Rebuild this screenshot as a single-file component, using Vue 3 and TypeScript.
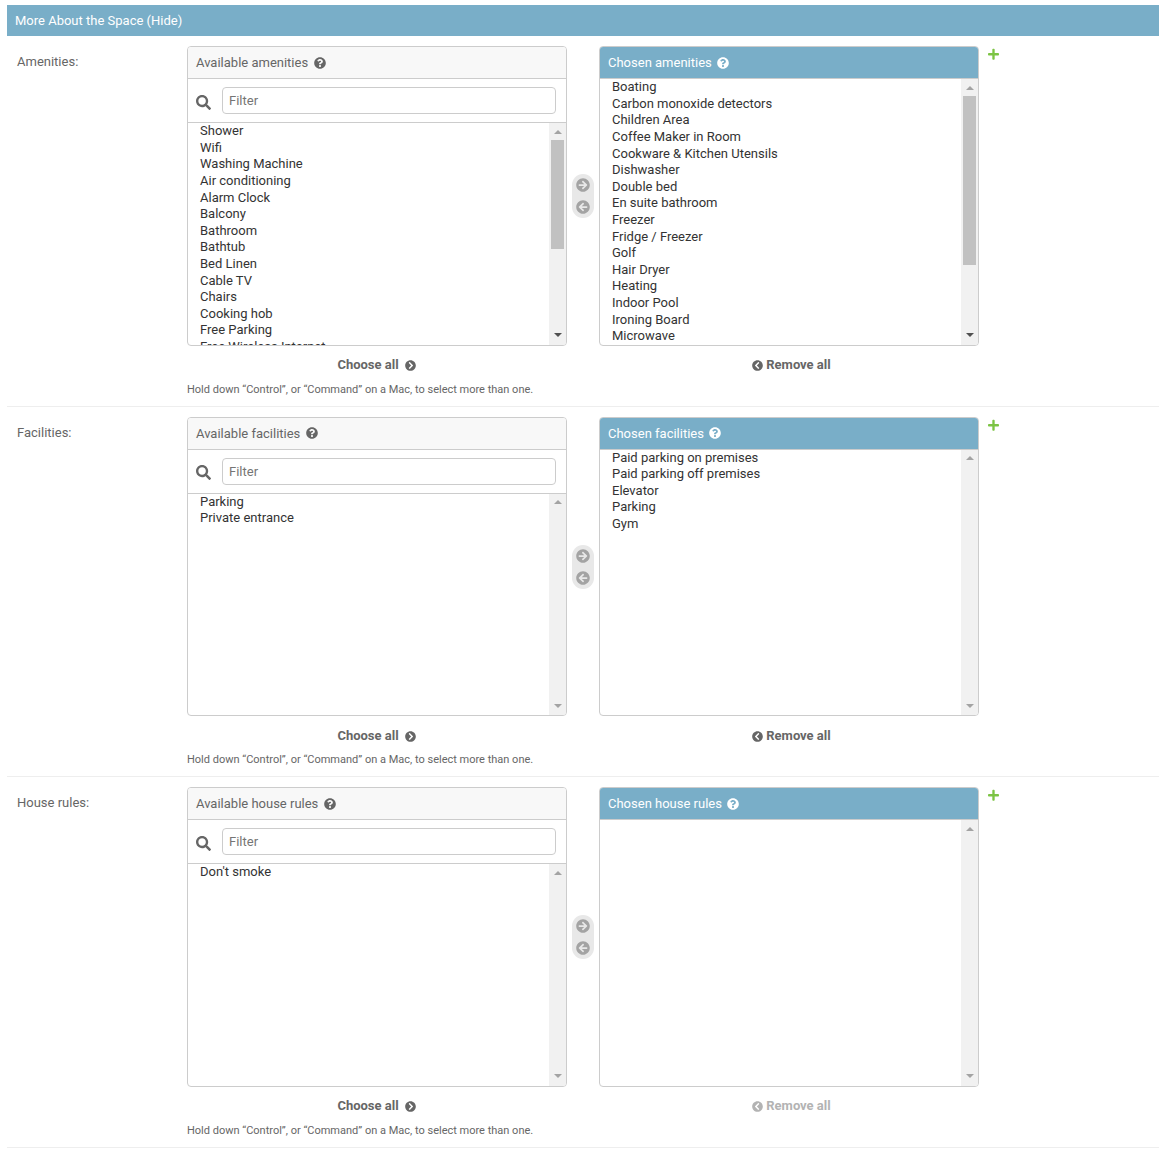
<script setup lang="ts">
interface Selector {
  label: string
  name: string
  available: string[]
  chosen: string[]
  availableThumb: boolean
  chosenThumb: boolean
  removeActive: boolean
}

const icons = {
  help: 'M504 256c0 136.997-111.043 248-248 248S8 392.997 8 256C8 119.083 119.043 8 256 8s248 111.083 248 248zM262.655 90c-54.497 0-89.255 22.957-116.549 63.758-3.536 5.286-2.353 12.415 2.715 16.258l34.699 26.31c5.205 3.947 12.621 3.008 16.665-2.122 17.864-22.658 30.113-35.797 57.303-35.797 20.429 0 45.698 13.148 45.698 32.958 0 14.976-12.363 22.667-32.534 33.976C247.128 238.528 216 254.941 216 296v4c0 6.627 5.373 12 12 12h56c6.627 0 12-5.373 12-12v-1.333c0-28.462 83.186-29.647 83.186-106.667 0-58.002-60.165-106-116.531-106zM256 338c-25.365 0-46 20.635-46 46 0 25.364 20.635 46 46 46s46-20.636 46-46c0-25.365-20.635-46-46-46z',
  search: 'M505 442.7L405.3 343c-4.5-4.5-10.6-7-17-7H372c27.6-35.3 44-79.7 44-128C416 93.1 322.9 0 208 0S0 93.1 0 208s93.1 208 208 208c48.3 0 92.7-16.4 128-44v16.3c0 6.4 2.5 12.5 7 17l99.7 99.7c9.4 9.4 24.6 9.4 33.9 0l28.3-28.3c9.4-9.4 9.4-24.6.1-34zM208 336c-70.7 0-128-57.2-128-128 0-70.7 57.2-128 128-128 70.7 0 128 57.2 128 128 0 70.7-57.2 128-128 128z',
  right: 'M256 8c137 0 248 111 248 248S393 504 256 504 8 393 8 256 119 8 256 8zm-28.9 143.6l75.5 72.4H120c-13.3 0-24 10.7-24 24v16c0 13.3 10.7 24 24 24h182.6l-75.5 72.4c-9.7 9.3-9.9 24.8-.4 34.3l11 10.9c9.4 9.4 24.6 9.4 33.9 0L404.3 273c9.4-9.4 9.4-24.6 0-33.9L271.6 106.3c-9.4-9.4-24.6-9.4-33.9 0l-11 10.9c-9.5 9.6-9.3 25.1.4 34.4z',
  left: 'M256 504C119 504 8 393 8 256S119 8 256 8s248 111 248 248-111 248-248 248zm28.9-143.6L209.4 288H392c13.3 0 24-10.7 24-24v-16c0-13.3-10.7-24-24-24H209.4l75.5-72.4c9.7-9.3 9.9-24.8.4-34.3l-11-10.9c-9.4-9.4-24.6-9.4-33.9 0L107.7 239c-9.4 9.4-9.4 24.6 0 33.9l132.7 132.7c9.4 9.4 24.6 9.4 33.9 0l11-10.9c9.5-9.5 9.3-25-.4-34.3z',
  chevronRight: 'M256 8c137 0 248 111 248 248S393 504 256 504 8 393 8 256 119 8 256 8zm113.9 231L234.4 103.5c-9.4-9.4-24.6-9.4-33.9 0l-17 17c-9.4 9.4-9.4 24.6 0 33.9L285.1 256 183.5 357.6c-9.4 9.4-9.4 24.6 0 33.9l17 17c9.4 9.4 24.6 9.4 33.9 0L369.9 273c9.4-9.4 9.4-24.6 0-34z',
  chevronLeft: 'M256 504C119 504 8 393 8 256S119 8 256 8s248 111 248 248-111 248-248 248zM142.1 273l135.5 135.5c9.4 9.4 24.6 9.4 33.9 0l17-17c9.4-9.4 9.4-24.6 0-33.9L226.9 256l101.6-101.6c9.4-9.4 9.4-24.6 0-33.9l-17-17c-9.4-9.4-24.6-9.4-33.9 0L142.1 239c-9.4 9.4-9.4 24.6 0 34z',
  plus: 'M416 208H272V64c0-17.67-14.33-32-32-32h-32c-17.67 0-32 14.33-32 32v144H32c-17.67 0-32 14.33-32 32v32c0 17.67 14.33 32 32 32h144v144c0 17.67 14.33 32 32 32h32c17.67 0 32-14.33 32-32V304h144c17.67 0 32-14.33 32-32v-32c0-17.67-14.33-32-32-32z',
}

const selectors: Selector[] = [
  {
    label: 'Amenities:',
    name: 'amenities',
    available: ['Shower', 'Wifi', 'Washing Machine', 'Air conditioning', 'Alarm Clock', 'Balcony', 'Bathroom', 'Bathtub', 'Bed Linen', 'Cable TV', 'Chairs', 'Cooking hob', 'Free Parking', 'Free Wireless Internet'],
    chosen: ['Boating', 'Carbon monoxide detectors', 'Children Area', 'Coffee Maker in Room', 'Cookware & Kitchen Utensils', 'Dishwasher', 'Double bed', 'En suite bathroom', 'Freezer', 'Fridge / Freezer', 'Golf', 'Hair Dryer', 'Heating', 'Indoor Pool', 'Ironing Board', 'Microwave'],
    availableThumb: true,
    chosenThumb: true,
    removeActive: true,
  },
  {
    label: 'Facilities:',
    name: 'facilities',
    available: ['Parking', 'Private entrance'],
    chosen: ['Paid parking on premises', 'Paid parking off premises', 'Elevator', 'Parking', 'Gym'],
    availableThumb: false,
    chosenThumb: false,
    removeActive: true,
  },
  {
    label: 'House rules:',
    name: 'house rules',
    available: ["Don't smoke"],
    chosen: [],
    availableThumb: false,
    chosenThumb: false,
    removeActive: false,
  },
]
</script>

<template>
  <div class="page">
    <h2 class="heading">More About the Space (Hide)</h2>
    <div v-for="s in selectors" :key="s.name" class="row">
      <label class="label">{{ s.label }}</label>
      <div class="field">
        <div class="selector">
          <div class="side">
            <div class="panel">
              <div class="title">
                <span>Available {{ s.name }}</span>
                <svg class="help" viewBox="0 0 512 512"><path :d="icons.help" /></svg>
              </div>
              <div class="filter">
                <svg class="search" viewBox="0 0 512 512"><path :d="icons.search" /></svg>
                <input class="filter-input" type="text" placeholder="Filter" />
              </div>
              <div class="list-wrap">
                <ul class="list">
                  <li v-for="o in s.available" :key="o">{{ o }}</li>
                </ul>
                <div class="scrollbar" :class="{ active: s.availableThumb }">
                  <i class="arrow up"></i>
                  <div class="track"><div v-if="s.availableThumb" class="thumb thumb-a"></div></div>
                  <i class="arrow down"></i>
                </div>
              </div>
            </div>
            <div class="action action-choose">
              <span>Choose all</span>
              <svg class="action-icon" viewBox="0 0 512 512"><path :d="icons.chevronRight" /></svg>
            </div>
          </div>

          <div class="movers">
            <div class="mover-pill">
              <svg viewBox="0 0 512 512"><path :d="icons.right" /></svg>
              <svg viewBox="0 0 512 512"><path :d="icons.left" /></svg>
            </div>
          </div>

          <div class="side">
            <div class="panel">
              <div class="title title-chosen">
                <span>Chosen {{ s.name }}</span>
                <svg class="help" viewBox="0 0 512 512"><path :d="icons.help" /></svg>
              </div>
              <div class="list-wrap">
                <ul class="list list-chosen">
                  <li v-for="o in s.chosen" :key="o">{{ o }}</li>
                </ul>
                <div class="scrollbar" :class="{ active: s.chosenThumb }">
                  <i class="arrow up"></i>
                  <div class="track"><div v-if="s.chosenThumb" class="thumb thumb-c"></div></div>
                  <i class="arrow down"></i>
                </div>
              </div>
            </div>
            <div class="action action-remove" :class="{ disabled: !s.removeActive }">
              <svg class="action-icon" viewBox="0 0 512 512"><path :d="icons.chevronLeft" /></svg>
              <span>Remove all</span>
            </div>
          </div>

          <svg class="plus" viewBox="0 0 448 512"><path :d="icons.plus" /></svg>
        </div>
        <p class="hint">Hold down “Control”, or “Command” on a Mac, to select more than one.</p>
      </div>
    </div>
  </div>
</template>

<style scoped>
.page {
  box-sizing: border-box;
  width: 1169px;
  padding: 5px 10px 0 7px;
  font-family: Roboto, "Liberation Sans", sans-serif;
  font-size: 13px;
  color: #333;
}
.heading {
  box-sizing: border-box;
  height: 31.4px;
  margin: 0;
  padding: 0 8px;
  background: #79aec8;
  color: #fff;
  font-size: 13px;
  font-weight: 400;
  line-height: 31px;
}
.row {
  box-sizing: border-box;
  display: flex;
  height: 370.4px;
  padding: 10px 10px 0;
  border-bottom: 1px solid #eee;
}
.label {
  flex: 0 0 170px;
  padding-top: 8px;
  line-height: 16px;
  color: #666;
}
.field {
  flex: 1;
  min-width: 0;
}
.selector {
  display: flex;
  align-items: flex-start;
}
.side {
  flex: 0 0 380px;
}
.panel {
  box-sizing: border-box;
  display: flex;
  flex-direction: column;
  height: 299.6px;
  border: 1px solid #ccc;
  border-radius: 4px;
  overflow: hidden;
}
.title {
  box-sizing: border-box;
  flex: none;
  display: flex;
  align-items: center;
  gap: 5.5px;
  height: 32px;
  padding: 0 8px;
  background: #f8f8f8;
  border-bottom: 1px solid #ccc;
  color: #666;
  font-size: 13px;
}
.title-chosen {
  background: #79aec8;
  color: #fff;
  border-bottom: 1px solid #ccc;
}
.help {
  width: 12px;
  height: 12px;
  fill: currentColor;
}
.filter {
  box-sizing: border-box;
  flex: none;
  display: flex;
  align-items: center;
  height: 44px;
  padding: 0 10px 0 8px;
  border-bottom: 1px solid #ccc;
}
.search {
  flex: none;
  width: 15px;
  height: 15px;
  margin-top: 3px;
  margin-right: 11px;
  fill: #666;
}
.filter-input {
  box-sizing: border-box;
  flex: 1;
  min-width: 0;
  height: 27px;
  padding: 0 6px;
  border: 1px solid #ccc;
  border-radius: 4px;
  font: inherit;
  font-size: 13px;
  color: #333;
  outline: none;
}
.filter-input::placeholder {
  color: #757575;
  opacity: 1;
}
.list-wrap {
  flex: 1;
  min-height: 0;
  display: flex;
  overflow: hidden;
}
.list {
  flex: 1;
  min-width: 0;
  margin: -0.2px 0 0;
  padding: 0 0 0 12px;
  list-style: none;
  overflow: hidden;
  line-height: 16.6px;
}
.scrollbar {
  flex: none;
  display: flex;
  flex-direction: column;
  width: 17px;
  background: #f1f1f1;
}
.arrow {
  flex: none;
  display: block;
  height: 17px;
  position: relative;
}
.arrow::after {
  content: "";
  position: absolute;
  left: 4.5px;
  border-left: 4px solid transparent;
  border-right: 4px solid transparent;
}
.arrow.up::after {
  top: 6.5px;
  border-bottom: 4px solid #a3a3a3;
}
.arrow.down::after {
  top: 5.5px;
  border-top: 4px solid #a3a3a3;
}
.scrollbar.active .arrow.down::after {
  border-top-color: #505050;
}
.track {
  flex: 1;
  min-height: 0;
}
.thumb {
  margin: 0 2px;
  background: #c1c1c1;
}
.thumb-a {
  height: 109px;
}
.thumb-c {
  height: 169px;
}
.action {
  display: flex;
  align-items: center;
  justify-content: center;
  gap: 6px;
  height: 20px;
  margin-top: 8.7px;
  color: #666;
  font-weight: 700;
}
.action-icon {
  width: 11px;
  height: 11px;
  margin-top: 2px;
  fill: currentColor;
}
.action-choose {
  padding-right: 1px;
}
.action-remove {
  gap: 3.5px;
  padding-left: 4.5px;
}
.action-remove.disabled {
  color: #b3b3b3;
}
.movers {
  flex: 0 0 32px;
  height: 300px;
  display: flex;
  align-items: center;
  justify-content: center;
}
.mover-pill {
  display: flex;
  flex-direction: column;
  align-items: center;
  gap: 8px;
  box-sizing: border-box;
  width: 22px;
  height: 44px;
  padding: 4px 0;
  border-radius: 11px;
  background: #e8e8e8;
}
.mover-pill svg {
  width: 14px;
  height: 14px;
  fill: #a3a3a3;
}
.plus {
  flex: none;
  width: 11px;
  height: 12.57px;
  margin: 2px 0 0 9px;
  fill: #7cc444;
}
.hint {
  margin: 8.3px 0 0;
  font-size: 11px;
  line-height: 14px;
  color: #666;
}
</style>
